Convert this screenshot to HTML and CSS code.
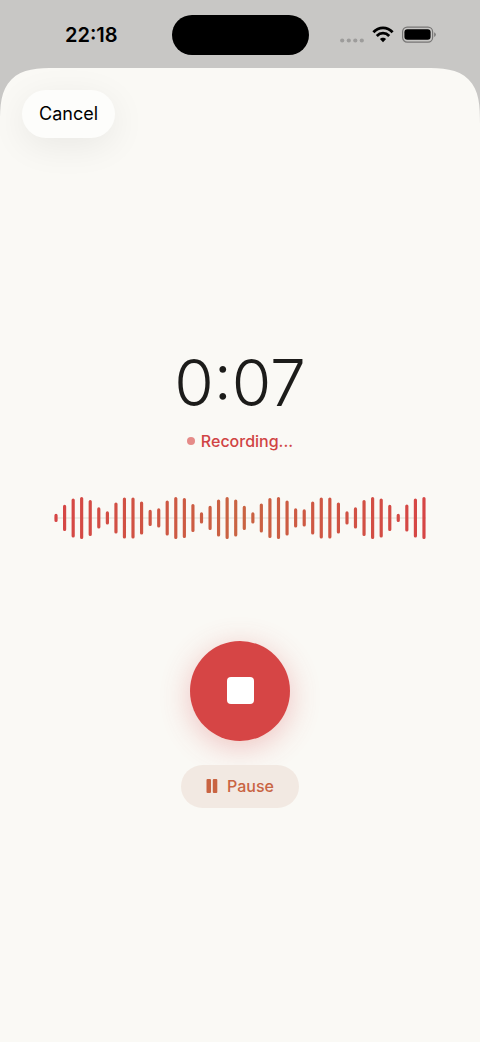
FILE: index.html
```html
<!DOCTYPE html>
<html lang="en">
<head>
<meta charset="utf-8">
<meta name="viewport" content="width=device-width, initial-scale=1">
<title>Recording</title>
<link rel="stylesheet" href="styles.css">
</head>
<body>
<header class="status-bar">
  <time class="clock">22:18</time>
  <div class="island"></div>
  <div class="indicators">
    <svg class="signal" width="24" height="18" viewBox="0 0 24 18" aria-hidden="true">
      <circle cx="2.200" cy="14.500" r="2.100"/><circle cx="8.800" cy="14.500" r="2.100"/><circle cx="15.300" cy="14.500" r="2.100"/><circle cx="21.800" cy="14.500" r="2.100"/>
    </svg>
    <svg class="wifi" width="22" height="18" viewBox="0 0 22 18" aria-hidden="true">
      <path class="wave" d="M1.400 6.200C6.800 .4 15.200 .4 20.600 6.200M4.800 9.900C8.300 6.300 13.700 6.300 17.200 9.900"/>
      <path d="M11 16.300L7.900 13.100C9.600 11.300 12.400 11.300 14.100 13.100Z"/>
    </svg>
    <svg class="battery" width="34" height="18" viewBox="0 0 34 18" aria-hidden="true">
      <rect class="shell" x="0.600" y="1.100" width="30" height="15" rx="4.600"/>
      <rect x="2.400" y="3.200" width="26.200" height="10.600" rx="3"/>
      <path class="tip" d="M32.200 6.200Q33.800 6.800 33.800 8.600T32.200 11Z"/>
    </svg>
  </div>
</header>
<main class="sheet">
  <div class="toolbar">
    <button class="cancel" type="button">Cancel</button>
  </div>
  <section class="recorder">
    <div class="timer">0:07</div>
    <p class="state"><span class="dot"></span>Recording...</p>
    <svg class="waveform" viewBox="0 0 373 44" aria-hidden="true">
      <defs>
        <linearGradient id="heat" gradientUnits="userSpaceOnUse" x1="0" y1="0" x2="373" y2="0">
          <stop offset="0" stop-color="#d64545"/><stop offset="0.500" stop-color="#c96442"/><stop offset="1" stop-color="#d64545"/>
        </linearGradient>
      </defs>
      <path class="axis" d="M0 22H373"/>
      <path class="bars" stroke="url(#heat)" d="M2 19.500v5M10.600 10.500v23M19.200 4v36M27.700 2.500v39M36.300 5.500v33M44.900 13v18M53.500 17v10M62.100 8v28M70.600 3v38M79.200 3v38M87.800 7v30M96.400 15.500v13M105 14v16M113.500 6v32M122.100 2.500v39M130.700 3.500v37M139.300 9.500v25M147.900 18v8M156.500 11.500v21M165 5v34M173.600 2.500v39M182.200 5v34M190.800 11.500v21M199.400 18v8M207.900 9v26M216.500 3.500v37M225.100 2.500v39M233.700 6v32M242.300 14v16M250.900 15v14M259.400 7v30M268 3v38M276.600 3v38M285.200 8v28M293.800 17v10M302.300 13v18M310.900 5.500v33M319.500 2.500v39M328.100 4v36M336.700 10.500v23M345.200 19.500v5M353.800 10v24M362.400 4v36M371 2.500v39"/>
    </svg>
    <button class="stop" type="button" aria-label="Stop recording"><span class="stop-mark"></span></button>
    <button class="pause" type="button">
      <svg width="12" height="16" viewBox="0 0 12 16" aria-hidden="true"><rect x="0.500" y="1" width="4.500" height="14" rx="1"/><rect x="6.800" y="1" width="4.500" height="14" rx="1"/></svg>
      Pause
    </button>
  </section>
</main>
</body>
</html>
```
FILE: styles.css
```css
* {
  box-sizing: border-box;
}

body {
  display: flex;
  flex-direction: column;
  min-height: 100vh;
  margin: 0;
  background: #c8c7c5;
  color: #1c1c1a;
  font-family: Inter, "Liberation Sans", sans-serif;
}

button {
  border: 0;
  font: inherit;
  cursor: pointer;
}

.status-bar {
  display: grid;
  grid-template-columns: 1fr 137px 1fr;
  align-items: center;
  height: 68px;
  padding-top: 2px;
}

.clock {
  padding-left: 11px;
  color: #000;
  font-size: 20px;
  font-weight: 600;
  line-height: 24px;
  text-align: center;
}

.island {
  height: 40px;
  border-radius: 20px;
  background: #000;
}

.indicators {
  display: flex;
  justify-content: flex-end;
  gap: 8px;
  padding-right: 44px;
}

.signal {
  fill: #9d9c9b;
}

.wave {
  fill: none;
  stroke: #000;
  stroke-width: 2.800;
}

.shell {
  fill: none;
  stroke: #777675;
  stroke-width: 1.200;
}

.tip {
  fill: #777675;
}

.sheet {
  display: flex;
  flex: 1;
  flex-direction: column;
  border-radius: 44px 44px 0 0;
  background: #faf9f5;
}

@supports (corner-shape: squircle) {
  .sheet {
    border-radius: 56px 56px 0 0;
    corner-shape: superellipse(1.600);
  }
}

.toolbar {
  padding: 22px 22px 0;
}

.cancel {
  height: 48px;
  padding: 0 17px;
  border-radius: 24px;
  background: #fdfdfb;
  box-shadow: 0 8px 36px rgb(0 0 0 / 7%);
  color: #000;
  font-size: 18px;
  line-height: 24px;
}

.recorder {
  display: flex;
  flex: 1;
  flex-direction: column;
  align-items: center;
  justify-content: center;
  padding: 0 54px 27px;
}

.timer {
  font-size: 64px;
  font-weight: 300;
  line-height: 76px;
}

.state {
  display: flex;
  align-items: center;
  gap: 6px;
  margin: 8px 0 0;
  color: #d04444;
  font-size: 16px;
  font-weight: 500;
  line-height: 24px;
}

.dot {
  width: 8px;
  height: 8px;
  border-radius: 50%;
  background: #e58b88;
}

.waveform {
  width: 100%;
  margin-top: 43px;
}

.axis {
  stroke: #e9e6df;
  stroke-width: 1.500;
}

.bars {
  fill: none;
  stroke-width: 3.200;
  stroke-linecap: round;
}

.stop {
  display: grid;
  place-items: center;
  width: 100px;
  height: 100px;
  margin-top: 101px;
  border-radius: 50%;
  background: #d64545;
  box-shadow: 0 6px 30px rgb(214 69 69 / 30%);
}

.stop-mark {
  width: 27px;
  height: 27px;
  border-radius: 4px;
  background: #fff;
}

.pause {
  display: flex;
  align-items: center;
  gap: 9px;
  height: 43px;
  margin-top: 24px;
  padding: 0 25px;
  border-radius: 22px;
  background: #f2e9e2;
  color: #c96442;
  font-size: 16px;
  font-weight: 500;
  line-height: 24px;
}

.pause svg {
  fill: currentColor;
}
```
